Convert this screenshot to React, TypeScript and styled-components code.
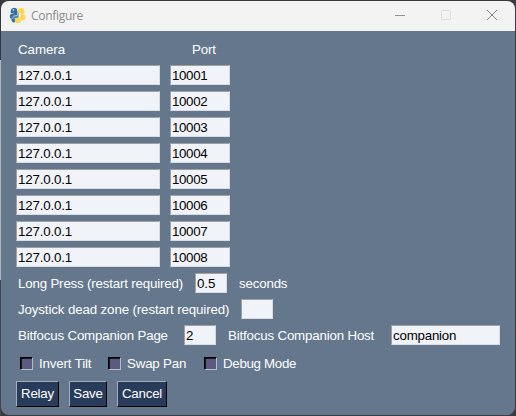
import React from "react";
import styled, { createGlobalStyle } from "styled-components";

const GlobalStyle = createGlobalStyle`
  * { box-sizing: border-box; }
  html, body { margin: 0; padding: 0; overflow: hidden; }
  body { background: #3b3a3e; font-family: "Liberation Sans", Arial, sans-serif; }
`;

const Desktop = styled.div`
  width: 516px;
  height: 416px;
  padding: 1px;
  background: linear-gradient(#39363b 0 60px, #b4b4b4 60px 280px, #464649 280px) left / 1px 100% no-repeat, #3b3a3e;
`;

const Window = styled.main`
  width: 514px;
  height: 414px;
  border-radius: 8px;
  overflow: hidden;
  background: #64778d;
`;

const TitleBar = styled.header`
  display: flex;
  align-items: center;
  height: 30px;
  padding: 0 0 2px 8px;
  background: #f3f3f3;
`;

const Title = styled.h1`
  flex: 1;
  margin: 2px 0 0 5px;
  font: 400 12px/28px "Open Sans", "Noto Sans", sans-serif;
  letter-spacing: -0.3px;
  color: #8c8c8c;
`;

const Controls = styled.div`
  display: flex;
`;

const Control = styled.button`
  display: flex;
  align-items: center;
  justify-content: center;
  width: 46px;
  height: 28px;
  padding: 0;
  border: 0;
  background: none;
`;

const Form = styled.form`
  padding: 5px 0 0 15px;
`;

const Row = styled.div`
  display: flex;
  align-items: center;
  height: 26px;
`;

const Label = styled.span<{ $w?: number; $ls?: number }>`
  flex: none;
  width: ${(p) => (p.$w ? p.$w + "px" : "auto")};
  padding: 1px 0 0 2px;
  font-size: 13.3px;
  line-height: 20px;
  letter-spacing: ${(p) => p.$ls ?? -0.17}px;
  white-space: nowrap;
  color: #fff;
`;

const Field = styled.input<{ $w: number; $ls?: number }>`
  flex: none;
  width: ${(p) => p.$w}px;
  height: 20px;
  margin: 0 10px 0 0;
  padding: 1px 1px 0;
  border: 1px solid;
  border-color: #a0a0a0 #d9dde3 #d9dde3 #a0a0a0;
  border-radius: 0;
  outline: 0;
  background: #f0f3f7;
  color: #000;
  font: 13.3px/17px "Liberation Sans", Arial, sans-serif;
  letter-spacing: ${(p) => p.$ls ?? -0.35}px;
`;

const Options = styled(Row)`
  height: 31px;
  padding-left: 4px;
`;

const Option = styled.label<{ $w: number }>`
  display: flex;
  align-items: center;
  width: ${(p) => p.$w}px;
`;

const Check = styled.span`
  flex: none;
  width: 13px;
  height: 13px;
  margin-right: 4px;
  border: 1px solid;
  border-color: #000 #b5bdc8 #b5bdc8 #000;
  background: #5b5a80;
  box-shadow: inset 1px 1px #17171f;
`;

const Actions = styled.div`
  display: flex;
  gap: 10px;
  padding-top: 2px;
`;

const Action = styled.button<{ $w: number; $ls?: number }>`
  width: ${(p) => p.$w}px;
  height: 26px;
  padding: 0;
  border: 1px solid;
  border-color: #a5adba #000 #000 #a5adba;
  border-radius: 0;
  background: #283b5b;
  color: #fff;
  font: 13.3px/24px "Liberation Sans", Arial, sans-serif;
  letter-spacing: ${(p) => p.$ls ?? -0.2}px;
`;

const Logo = () => (
  <svg width="17" height="17" viewBox="0 0 17 17">
    <path d="M2.2 2.4Q3 .8 5.3.8q2.5 0 2.9 2v4.4q0 1.3-1.5 1.3H5.1q-1.4 0-1.4 1.8v1.5H2.6Q1 11.8.8 9.8.5 8.1 1.8 6.8l2.8-.3v-.6H1.8Q1.4 3.8 2.2 2.4Z" fill="#34709f" />
    <path d="M4.3 9.3h2.8q1.5-.2 1.5-1.6V4.2l1 .2v5.5q-.2 1.3-1.6 1.3H6.3q-1.4.1-1.4 1.9l-.9.8Z" fill="#4283b5" />
    <path d="M2.2 12.5q2.2-1.6 4.3-.8v3q-.8.9-2.2.7-2-.6-2.1-2.9Z" fill="#34709f" />
    <path d="M9 3.2Q9.5.9 12.2.9q2.8 0 3.1 2.3v2.4q0 1.3-1.6 1.3l-1 .7h2.6q1.4.8 1.2 3-.2 2.4-2.3 2.7l-1.9.2v1q-.2 1.6-3.1 1.6-3 0-3.4-1.9v-2.1q.2-1.3 1.7-1.3H10q1.3-.2 1.3-1.7V5.8H9Z" fill="#ffd54c" />
    <circle cx="4.5" cy="3" r=".8" fill="#f3f3f3" />
    <circle cx="11" cy="13.7" r=".8" fill="#f3f3f3" />
  </svg>
);

const ports = [10001, 10002, 10003, 10004, 10005, 10006, 10007, 10008];

export default function App() {
  return (
    <>
      <GlobalStyle />
      <Desktop>
        <Window>
          <TitleBar>
            <Logo />
            <Title>Configure</Title>
            <Controls>
              <Control type="button" aria-label="Minimize">
                <svg width="10" height="10"><path d="M0 5.5h10" stroke="#929292" /></svg>
              </Control>
              <Control type="button" aria-label="Maximize">
                <svg width="10" height="10"><rect x=".5" y=".5" width="9" height="9" rx="1" fill="none" stroke="#dcdcdc" /></svg>
              </Control>
              <Control type="button" aria-label="Close">
                <svg width="10" height="10"><path d="m0 0 10 10M10 0 0 10" stroke="#858585" /></svg>
              </Control>
            </Controls>
          </TitleBar>
          <Form>
            <Row>
              <Label $w={174} $ls={-0.05}>Camera</Label>
              <Label>Port</Label>
            </Row>
            {ports.map((port) => (
              <Row key={port}>
                <Field $w={144} $ls={-0.15} defaultValue="127.0.0.1" />
                <Field $w={60} defaultValue={port} />
              </Row>
            ))}
            <Row>
              <Label $w={179}>Long Press (restart required)</Label>
              <Field $w={32} $ls={-0.1} defaultValue="0.5" />
              <Label>seconds</Label>
            </Row>
            <Row>
              <Label $w={225} $ls={-0.12}>Joystick dead zone (restart required)</Label>
              <Field $w={32} defaultValue="" />
            </Row>
            <Row>
              <Label $w={168}>Bitfocus Companion Page</Label>
              <Field $w={32} defaultValue="2" />
              <Label $w={165}>Bitfocus Companion Host</Label>
              <Field $w={109} $ls={-0.2} defaultValue="companion" />
            </Row>
            <Options>
              <Option $w={88}><Check /><Label $ls={-0.15}>Invert Tilt</Label></Option>
              <Option $w={96}><Check /><Label>Swap Pan</Label></Option>
              <Option $w={100}><Check /><Label $ls={-0.3}>Debug Mode</Label></Option>
            </Options>
            <Actions>
              <Action type="button" $w={43}>Relay</Action>
              <Action type="button" $w={38}>Save</Action>
              <Action type="button" $w={50}>Cancel</Action>
            </Actions>
          </Form>
        </Window>
      </Desktop>
    </>
  );
}
